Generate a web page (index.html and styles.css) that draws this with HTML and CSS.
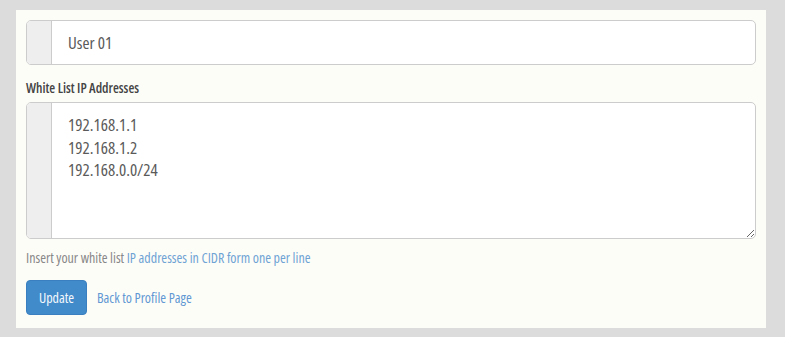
FILE: index.html
```html
<html>
  <head>
    <link rel="stylesheet" href="styles.css">
    <title>White List</title>
  </head>
  <body>
    <div class="panel">
      <form class="profile-form">
        <div class="field-group">
          <span class="addon"></span>
          <input class="field" name="name" value="User 01" />
        </div>

        <label class="field-label" for="whitelist">White List IP Addresses</label>
        <div class="field-group area-group">
          <span class="addon"></span>
          <textarea class="field area" id="whitelist" name="whitelist">192.168.1.1
192.168.1.2
192.168.0.0/24</textarea>
        </div>
        <p class="help">Insert your white list <span class="hint">IP addresses in CIDR form one per line</span></p>

        <div class="actions">
          <button type="submit" class="btn">Update</button>
          <a href="#" class="back">Back to Profile Page</a>
        </div>
      </form>
    </div>
  </body>
</html>
```

FILE: styles.css
```css
body {
  margin: 0;
  background-color: #dcdcdc;
  font-family: "Open Sans", sans-serif;
  font-stretch: 75%;
}

.panel {
  width: 730px;
  margin: 10px 0 0 16px;
  padding: 10px 10px 13px 10px;
  background-color: #fdfdf8;
}

.profile-form {
  margin: 0;
}

.field-group {
  display: flex;
  border: 1px solid #cccccc;
  border-radius: 5px;
  background-color: #ffffff;
  overflow: hidden;
}

.addon {
  width: 24px;
  background-color: #eeeeee;
  border-right: 1px solid #cccccc;
}

.field {
  flex: 1;
  border: none;
  outline: none;
  background: transparent;
  font-family: inherit;
  font-stretch: 75%;
  font-size: 17px;
  color: #5a5a5a;
  padding: 0 16px;
  height: 43px;
}

.area {
  height: 135px;
  padding: 11px 16px;
  line-height: 22.5px;
  resize: vertical;
}

.field-label {
  display: block;
  margin: 14px 0 4px 0;
  font-size: 13.5px;
  line-height: 19px;
  font-weight: 600;
  color: #444444;
}

.help {
  margin: 9px 0 0 0;
  font-size: 14px;
  color: #888888;
}

.hint {
  color: #6ea3d4;
}

.actions {
  display: flex;
  align-items: center;
  margin-top: 13px;
}

.btn {
  height: 35px;
  width: 61px;
  border: 1px solid #3a7fbf;
  border-radius: 4px;
  background-color: #428bca;
  color: #f4f8fc;
  font-family: inherit;
  font-stretch: 75%;
  font-size: 14px;
}

.back {
  margin-left: 10px;
  font-size: 14px;
  color: #6198d3;
  text-decoration: none;
}
```
